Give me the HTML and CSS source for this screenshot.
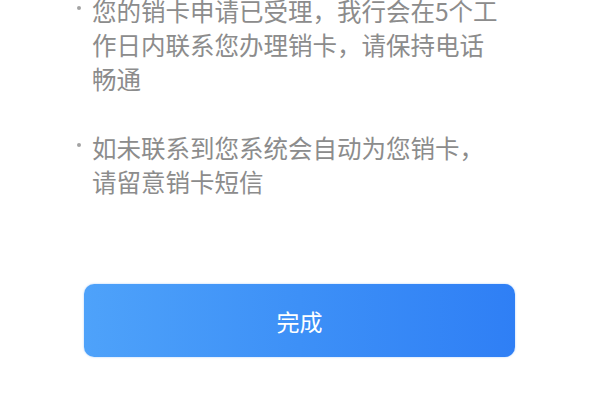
FILE: index.html
```html
<!DOCTYPE html>
<html lang="zh-CN">
<head>
<meta charset="utf-8">
<link rel="stylesheet" href="styles.css">
</head>
<body>
<div class="page">
  <ul class="tips">
    <li class="tip"><span class="bullet"></span><span class="tip-text">您的销卡申请已受理，我行会在5个工作日内联系您办理销卡，请保持电话畅通</span></li>
    <li class="tip"><span class="bullet"></span><span class="tip-text">如未联系到您系统会自动为您销卡，请留意销卡短信</span></li>
  </ul>
  <button class="done-btn" type="button">完成</button>
</div>
</body>
</html>
```
FILE: styles.css
```css
html, body {
  margin: 0;
  padding: 0;
  background: #ffffff;
}
body {
  width: 600px;
  height: 400px;
  overflow: hidden;
  font-family: "Noto Sans CJK SC", "Noto Sans", sans-serif;
}
.page {
  display: flex;
  flex-direction: column;
}
.tips {
  list-style: none;
  margin: -6px 0 0 0;
  padding: 0 0 0 77px;
  width: 426px;
  display: flex;
  flex-direction: column;
  gap: 35px;
}
.tip {
  display: flex;
  align-items: flex-start;
  color: #8c8c8c;
  font-size: 24.5px;
  line-height: 34px;
}
.bullet {
  flex: 0 0 15px;
  height: 34px;
  display: flex;
  align-items: center;
}
.bullet::before {
  content: "";
  width: 4px;
  height: 4px;
  border-radius: 50%;
  background: #a3a3a3;
  margin-bottom: 6px;
  margin-left: 0;
}
.tip-text {
  flex: 1 1 auto;
}
.done-btn {
  margin: 85px 0 0 84px;
  width: 431px;
  height: 73px;
  border: none;
  border-radius: 10px;
  background: linear-gradient(90deg, #4ea2fa 0%, #3d90f7 50%, #2f7ff5 100%);
  box-shadow: 0 0 2px rgba(70, 150, 250, 0.5);
  color: #ffffff;
  font-family: "Noto Sans CJK SC", "Noto Sans", sans-serif;
  font-size: 23px;
  padding: 0;
  cursor: pointer;
}
```
